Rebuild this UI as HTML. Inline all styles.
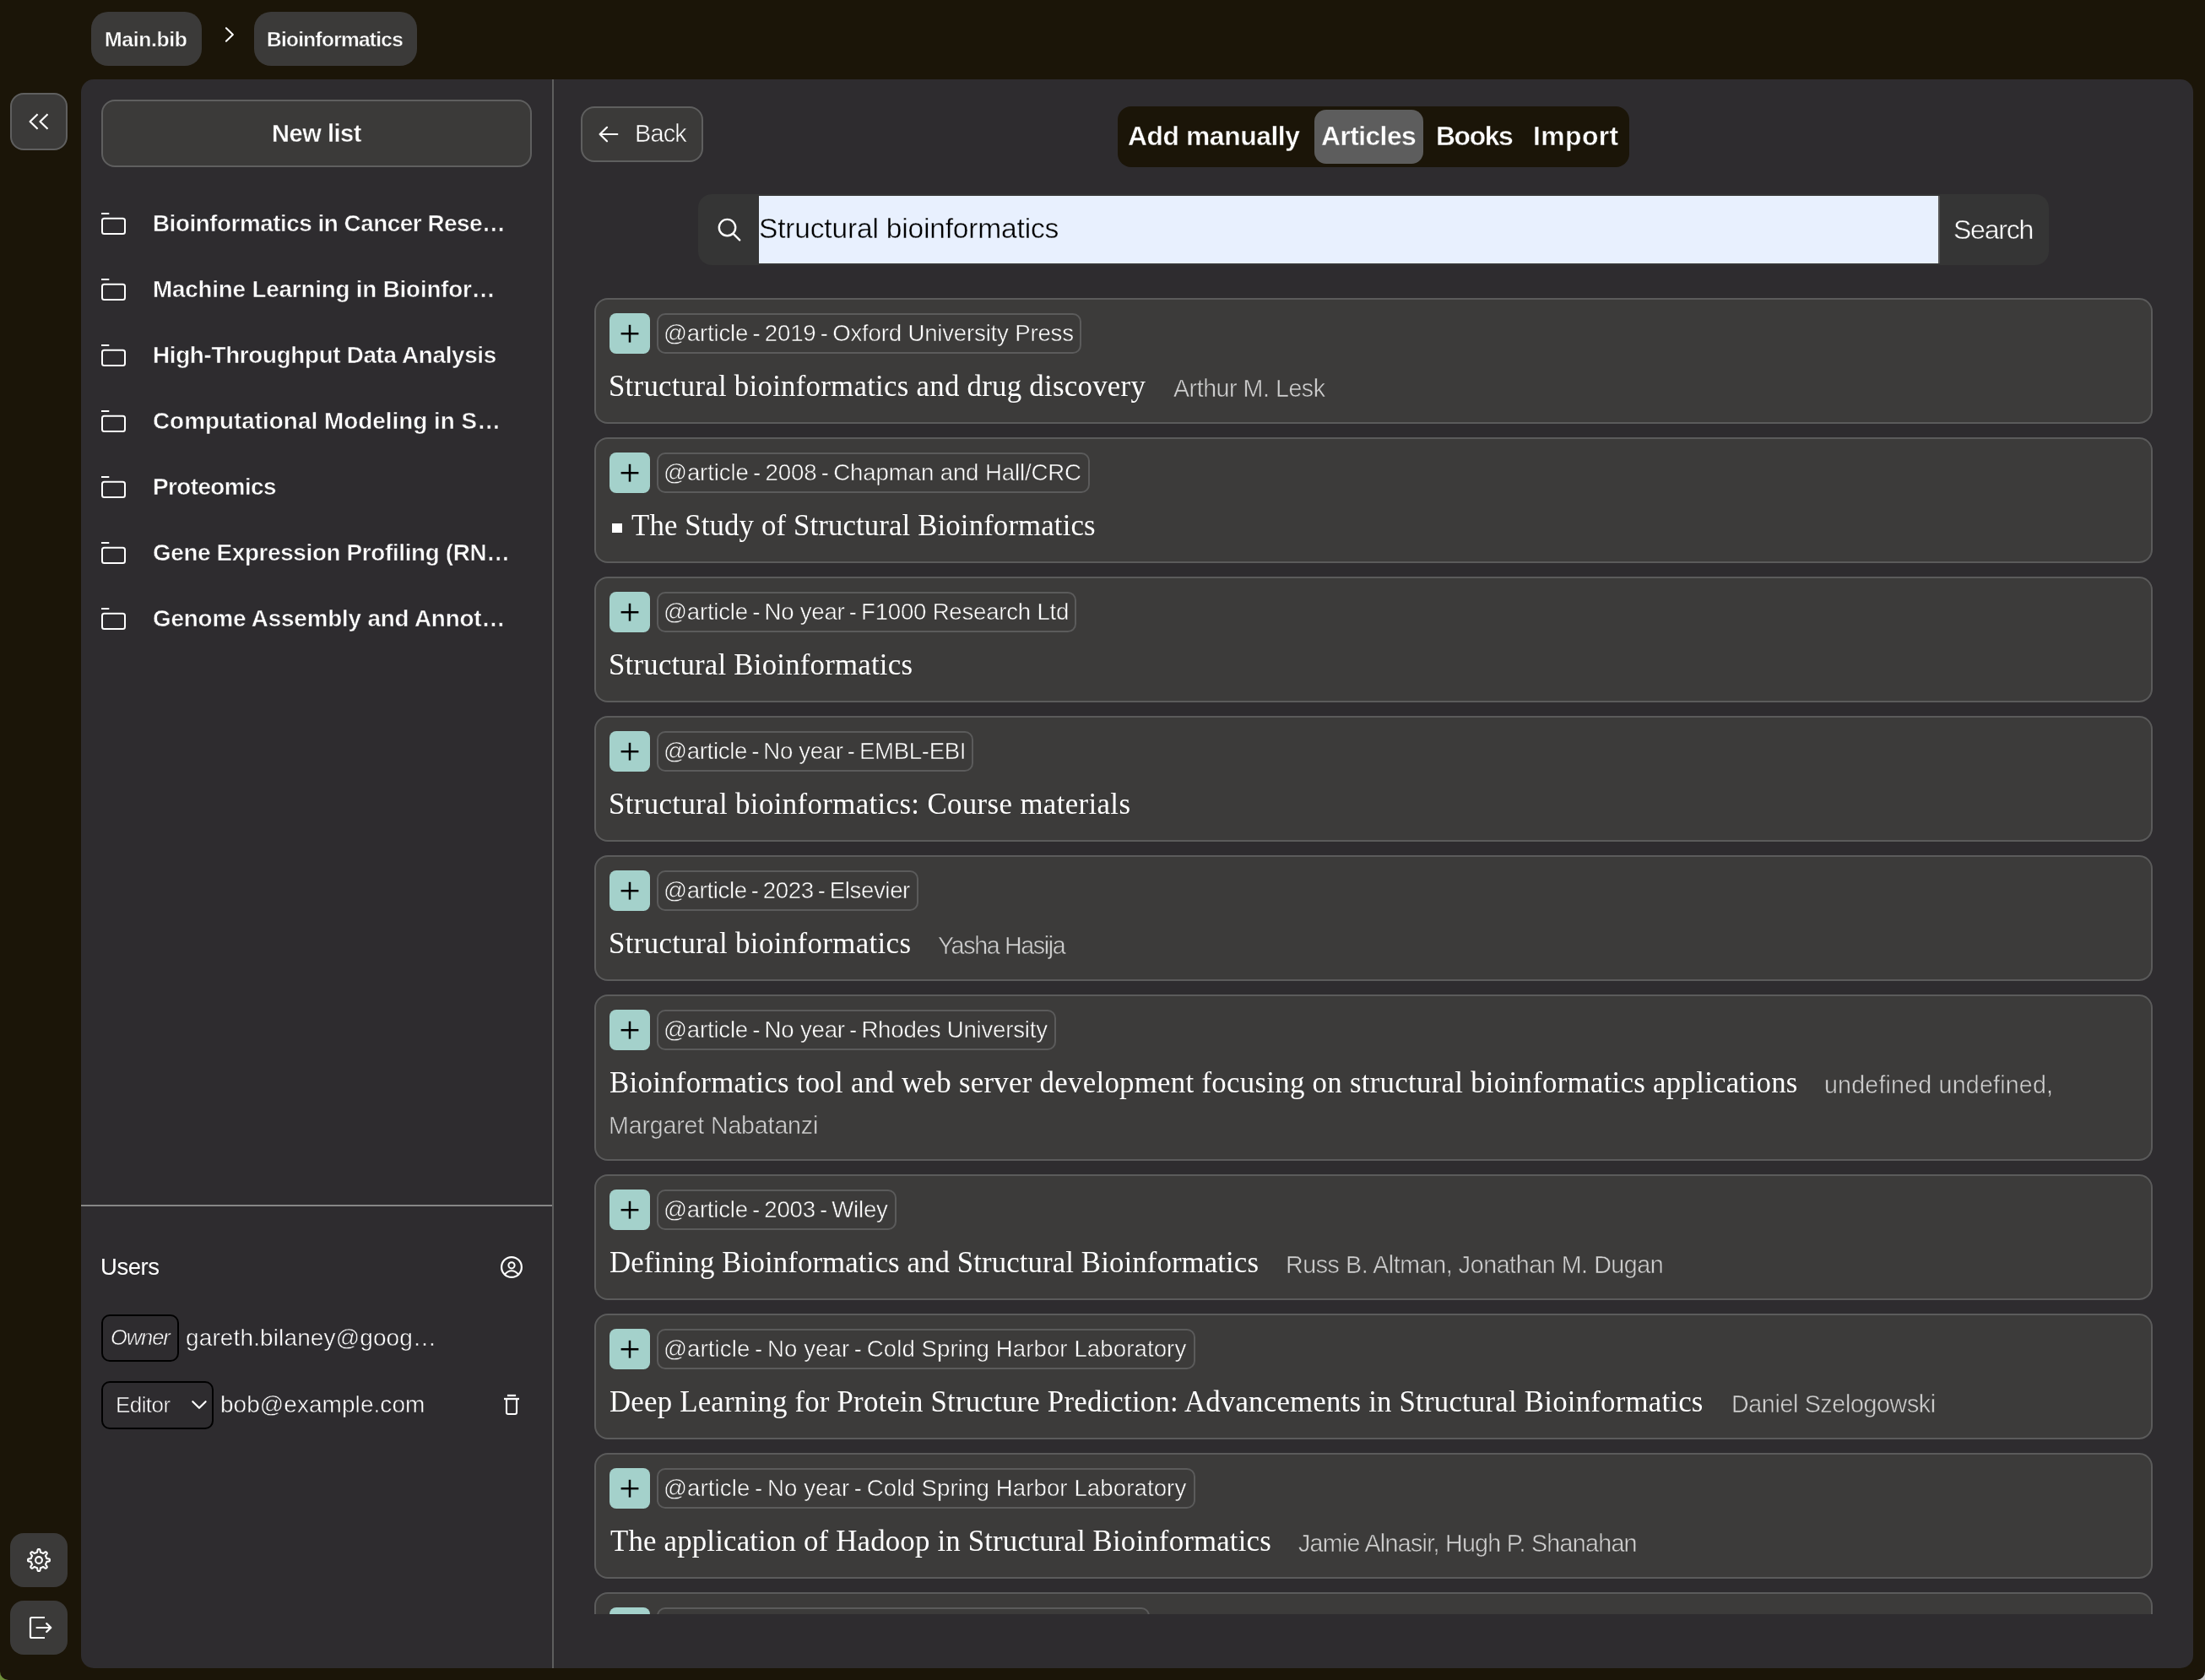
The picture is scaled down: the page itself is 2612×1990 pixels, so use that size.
<!DOCTYPE html>
<html><head><meta charset="utf-8"><style>
html,body{margin:0;padding:0}
body{width:2612px;height:1990px;background:#1b1508;position:relative;overflow:hidden;font-family:'Liberation Sans', sans-serif}
.t{position:absolute;white-space:nowrap;will-change:transform}
.box{position:absolute;box-sizing:border-box}
.card{position:absolute;box-sizing:border-box;left:704px;width:1846px;background:#3c3b3a;border:2px solid #5b5b5b;border-radius:16px}
.plus{position:absolute;left:722px;width:48px;height:48px;background:#a4d1cb;border-radius:8px}
.tag{position:absolute;box-sizing:border-box;left:778px;height:48px;border:2px solid #5b5b5b;border-radius:10px}
.ico{position:absolute;left:0;top:0}
</style></head><body>
<div class="box" style="left:0;top:1975px;width:24px;height:15px;background:#6f8f3a"></div>
<div class="box" style="left:2590px;top:1968px;width:22px;height:22px;background:#c8c8c8"></div>
<div class="box" style="left:0;top:0;width:2612px;height:1990px;background:#1b1508;border-radius:0 0 10px 10px"></div>
<div class="box" style="left:108px;top:14px;width:131px;height:64px;background:#3b3a39;border-radius:20px"></div>
<div class="box" style="left:301px;top:14px;width:193px;height:64px;background:#3b3a39;border-radius:20px"></div>
<div class="box" style="left:12px;top:110px;width:68px;height:68px;background:#3b3a39;border:2px solid #5f5f5f;border-radius:16px"></div>
<div class="box" style="left:12px;top:1816px;width:68px;height:64px;background:#3b3a39;border-radius:16px"></div>
<div class="box" style="left:12px;top:1896px;width:68px;height:64px;background:#3b3a39;border-radius:16px"></div>
<div class="box" style="left:96px;top:94px;width:2502px;height:1882px;background:#2e2c2f;border-radius:15px"></div>
<div class="box" style="left:654px;top:94px;width:2px;height:1882px;background:#5e5e5e"></div>
<div class="box" style="left:96px;top:1427px;width:558px;height:2px;background:#878787"></div>
<div class="box" style="left:120px;top:118px;width:510px;height:80px;background:#3b3a39;border:2px solid #5f5f5f;border-radius:16px"></div>
<div class="box" style="left:120px;top:1557px;width:92px;height:56px;border:2px solid #000;border-radius:10px"></div>
<div class="box" style="left:120px;top:1636px;width:133px;height:57px;border:2px solid #000;border-radius:10px"></div>
<div class="box" style="left:688px;top:126px;width:145px;height:66px;background:#3b3a39;border:2px solid #5f5f5f;border-radius:16px"></div>
<div class="box" style="left:1324px;top:126px;width:606px;height:72px;background:#1b1508;border-radius:16px"></div>
<div class="box" style="left:1557px;top:130px;width:129px;height:63.5px;background:#5d5d5d;border-radius:14px"></div>
<div class="box" style="left:827px;top:230px;width:1600px;height:84px;background:#353535;border-radius:16px"></div>
<div class="box" style="left:899px;top:232px;width:1397px;height:80px;background:#e8f0fe"></div>
<div class="box" style="left:2296px;top:232px;width:2px;height:80px;background:#555"></div>
<div style="position:absolute;left:656px;top:340px;width:1942px;height:1572px;overflow:hidden">
<div style="position:absolute;left:-656px;top:-340px;width:2612px;height:1990px">
<div class="card" style="top:353px;height:149px"></div>
<div class="plus" style="top:371px"></div>
<div class="tag" style="top:371px;width:503.4000000000001px"></div>
<div class="card" style="top:518px;height:149px"></div>
<div class="plus" style="top:536px"></div>
<div class="tag" style="top:536px;width:512.5px"></div>
<div style="position:absolute;left:725.4px;top:619.6px;width:11.4px;height:11px;background:#fff"></div>
<div class="card" style="top:683px;height:149px"></div>
<div class="plus" style="top:701px"></div>
<div class="tag" style="top:701px;width:497.20000000000005px"></div>
<div class="card" style="top:848px;height:149px"></div>
<div class="plus" style="top:866px"></div>
<div class="tag" style="top:866px;width:375px"></div>
<div class="card" style="top:1013px;height:149px"></div>
<div class="plus" style="top:1031px"></div>
<div class="tag" style="top:1031px;width:310.29999999999995px"></div>
<div class="card" style="top:1178px;height:197px"></div>
<div class="plus" style="top:1196px"></div>
<div class="tag" style="top:1196px;width:473.4000000000001px"></div>
<div class="card" style="top:1391px;height:149px"></div>
<div class="plus" style="top:1409px"></div>
<div class="tag" style="top:1409px;width:284.20000000000005px"></div>
<div class="card" style="top:1556px;height:149px"></div>
<div class="plus" style="top:1574px"></div>
<div class="tag" style="top:1574px;width:637.5999999999999px"></div>
<div class="card" style="top:1721px;height:149px"></div>
<div class="plus" style="top:1739px"></div>
<div class="tag" style="top:1739px;width:637.5999999999999px"></div>
<div class="card" style="top:1886px;height:149px"></div>
<div class="plus" style="top:1904px"></div>
<div class="tag" style="top:1904px;width:584.3px"></div>
</div></div>
<div class="t" style="left:124.30px;top:35.01px;font:normal 700 24.8px/24.8px 'Liberation Sans', sans-serif;color:#fff;letter-spacing:-0.387px;-webkit-text-stroke:0.4px #3b3a39">Main.bib</div>
<div class="t" style="left:316.20px;top:35.15px;font:normal 700 24.4px/24.4px 'Liberation Sans', sans-serif;color:#fff;letter-spacing:-0.692px;-webkit-text-stroke:0.4px #3b3a39">Bioinformatics</div>
<div class="t" style="left:321.60px;top:143.75px;font:normal 700 29px/29px 'Liberation Sans', sans-serif;color:#fff;letter-spacing:-0.447px;-webkit-text-stroke:0.4px #3b3a39">New list</div>
<div class="t" style="left:180.80px;top:250.97px;font:normal 700 27.8px/27.8px 'Liberation Sans', sans-serif;color:#fff;letter-spacing:-0.454px;-webkit-text-stroke:0.5px #2e2c2f">Bioinformatics in Cancer Rese…</div>
<div class="t" style="left:180.80px;top:328.97px;font:normal 700 27.8px/27.8px 'Liberation Sans', sans-serif;color:#fff;letter-spacing:-0.189px;-webkit-text-stroke:0.5px #2e2c2f">Machine Learning in Bioinfor…</div>
<div class="t" style="left:180.80px;top:406.97px;font:normal 700 27.8px/27.8px 'Liberation Sans', sans-serif;color:#fff;letter-spacing:-0.311px;-webkit-text-stroke:0.5px #2e2c2f">High-Throughput Data Analysis</div>
<div class="t" style="left:180.80px;top:484.97px;font:normal 700 27.8px/27.8px 'Liberation Sans', sans-serif;color:#fff;letter-spacing:0.046px;-webkit-text-stroke:0.5px #2e2c2f">Computational Modeling in S…</div>
<div class="t" style="left:180.80px;top:562.97px;font:normal 700 27.8px/27.8px 'Liberation Sans', sans-serif;color:#fff;letter-spacing:-0.548px;-webkit-text-stroke:0.5px #2e2c2f">Proteomics</div>
<div class="t" style="left:180.80px;top:640.97px;font:normal 700 27.8px/27.8px 'Liberation Sans', sans-serif;color:#fff;letter-spacing:-0.327px;-webkit-text-stroke:0.5px #2e2c2f">Gene Expression Profiling (RN…</div>
<div class="t" style="left:180.80px;top:718.97px;font:normal 700 27.8px/27.8px 'Liberation Sans', sans-serif;color:#fff;letter-spacing:-0.156px;-webkit-text-stroke:0.5px #2e2c2f">Genome Assembly and Annot…</div>
<div class="t" style="left:118.80px;top:1487.22px;font:normal 400 27.5px/27.5px 'Liberation Sans', sans-serif;color:#fff;letter-spacing:-0.465px">Users</div>
<div class="t" style="left:130.70px;top:1571.51px;font:italic 400 25.5px/25.5px 'Liberation Sans', sans-serif;color:#fff;letter-spacing:-1.078px;-webkit-text-stroke:0.5px #2e2c2f">Owner</div>
<div class="t" style="left:220.00px;top:1571.40px;font:normal 400 28px/28px 'Liberation Sans', sans-serif;color:#fff;letter-spacing:0.126px;-webkit-text-stroke:0.5px #2e2c2f">gareth.bilaney@goog…</div>
<div class="t" style="left:137.00px;top:1651.09px;font:normal 400 26px/26px 'Liberation Sans', sans-serif;color:#fff;letter-spacing:-0.572px;-webkit-text-stroke:0.5px #2e2c2f">Editor</div>
<div class="t" style="left:260.80px;top:1650.30px;font:normal 400 28px/28px 'Liberation Sans', sans-serif;color:#fff;letter-spacing:0.048px;-webkit-text-stroke:0.5px #2e2c2f">bob@example.com</div>
<div class="t" style="left:751.60px;top:144.32px;font:normal 400 28.8px/28.8px 'Liberation Sans', sans-serif;color:#fff;letter-spacing:-0.774px;-webkit-text-stroke:0.5px #3b3a39">Back</div>
<div class="t" style="left:1336.00px;top:145.58px;font:normal 700 31.8px/31.8px 'Liberation Sans', sans-serif;color:#fff;letter-spacing:-0.409px;-webkit-text-stroke:0.4px #1b1508">Add manually</div>
<div class="t" style="left:1565.30px;top:145.58px;font:normal 700 31.8px/31.8px 'Liberation Sans', sans-serif;color:#fff;letter-spacing:-0.566px;-webkit-text-stroke:0.4px #5d5d5d">Articles</div>
<div class="t" style="left:1701.30px;top:145.58px;font:normal 700 31.8px/31.8px 'Liberation Sans', sans-serif;color:#fff;letter-spacing:-1.373px;-webkit-text-stroke:0.4px #1b1508">Books</div>
<div class="t" style="left:1816.00px;top:145.58px;font:normal 700 31.8px/31.8px 'Liberation Sans', sans-serif;color:#fff;letter-spacing:0.455px;-webkit-text-stroke:0.4px #1b1508">Import</div>
<div class="t" style="left:898.80px;top:254.36px;font:normal 400 33.6px/33.6px 'Liberation Sans', sans-serif;color:#000;letter-spacing:-0.203px;-webkit-text-stroke:0.4px #e8f0fe">Structural bioinformatics</div>
<div class="t" style="left:2314.00px;top:255.81px;font:normal 400 32px/32px 'Liberation Sans', sans-serif;color:#fff;letter-spacing:-1.219px;-webkit-text-stroke:0.5px #353535">Search</div>
<div class="t" style="left:786.20px;top:381.34px;font:normal 400 27.6px/27.6px 'Liberation Sans', sans-serif;color:#fff;letter-spacing:-0.182px;-webkit-text-stroke:0.5px #3c3b3a">@article - 2019 - Oxford University Press</div>
<div class="t" style="left:720.60px;top:441.36px;font:normal 400 34.8px/34.8px 'Liberation Serif', serif;color:#fff;letter-spacing:0.268px">Structural bioinformatics and drug discovery</div>
<div class="t" style="left:1390.00px;top:446.49px;font:normal 400 28.6px/28.6px 'Liberation Sans', sans-serif;color:#cfcfcf;letter-spacing:-0.455px;-webkit-text-stroke:0.5px #3c3b3a">Arthur M. Lesk</div>
<div class="t" style="left:786.20px;top:546.34px;font:normal 400 27.6px/27.6px 'Liberation Sans', sans-serif;color:#fff;letter-spacing:-0.120px;-webkit-text-stroke:0.5px #3c3b3a">@article - 2008 - Chapman and Hall/CRC</div>
<div class="t" style="left:747.60px;top:606.36px;font:normal 400 34.8px/34.8px 'Liberation Serif', serif;color:#fff;letter-spacing:0.121px">The Study of Structural Bioinformatics</div>
<div class="t" style="left:786.20px;top:711.34px;font:normal 400 27.6px/27.6px 'Liberation Sans', sans-serif;color:#fff;letter-spacing:-0.221px;-webkit-text-stroke:0.5px #3c3b3a">@article - No year - F1000 Research Ltd</div>
<div class="t" style="left:720.60px;top:771.36px;font:normal 400 34.8px/34.8px 'Liberation Serif', serif;color:#fff;letter-spacing:0.220px">Structural Bioinformatics</div>
<div class="t" style="left:786.20px;top:876.34px;font:normal 400 27.6px/27.6px 'Liberation Sans', sans-serif;color:#fff;letter-spacing:-0.323px;-webkit-text-stroke:0.5px #3c3b3a">@article - No year - EMBL-EBI</div>
<div class="t" style="left:720.60px;top:936.36px;font:normal 400 34.8px/34.8px 'Liberation Serif', serif;color:#fff;letter-spacing:0.379px">Structural bioinformatics: Course materials</div>
<div class="t" style="left:786.20px;top:1041.34px;font:normal 400 27.6px/27.6px 'Liberation Sans', sans-serif;color:#fff;letter-spacing:-0.373px;-webkit-text-stroke:0.5px #3c3b3a">@article - 2023 - Elsevier</div>
<div class="t" style="left:720.60px;top:1101.36px;font:normal 400 34.8px/34.8px 'Liberation Serif', serif;color:#fff;letter-spacing:0.379px">Structural bioinformatics</div>
<div class="t" style="left:1111.00px;top:1106.49px;font:normal 400 28.6px/28.6px 'Liberation Sans', sans-serif;color:#cfcfcf;letter-spacing:-1.332px;-webkit-text-stroke:0.5px #3c3b3a">Yasha Hasija</div>
<div class="t" style="left:786.20px;top:1206.34px;font:normal 400 27.6px/27.6px 'Liberation Sans', sans-serif;color:#fff;letter-spacing:-0.206px;-webkit-text-stroke:0.5px #3c3b3a">@article - No year - Rhodes University</div>
<div class="t" style="left:721.60px;top:1266.36px;font:normal 400 34.8px/34.8px 'Liberation Serif', serif;color:#fff;letter-spacing:0.286px">Bioinformatics tool and web server development focusing on structural bioinformatics applications</div>
<div class="t" style="left:2161.00px;top:1271.49px;font:normal 400 28.6px/28.6px 'Liberation Sans', sans-serif;color:#cfcfcf;letter-spacing:0.201px;-webkit-text-stroke:0.5px #3c3b3a">undefined undefined,</div>
<div class="t" style="left:721.00px;top:1318.99px;font:normal 400 28.6px/28.6px 'Liberation Sans', sans-serif;color:#cfcfcf;letter-spacing:-0.163px;-webkit-text-stroke:0.5px #3c3b3a">Margaret Nabatanzi</div>
<div class="t" style="left:786.20px;top:1419.34px;font:normal 400 27.6px/27.6px 'Liberation Sans', sans-serif;color:#fff;letter-spacing:-0.233px;-webkit-text-stroke:0.5px #3c3b3a">@article - 2003 - Wiley</div>
<div class="t" style="left:721.60px;top:1479.36px;font:normal 400 34.8px/34.8px 'Liberation Serif', serif;color:#fff;letter-spacing:0.106px">Defining Bioinformatics and Structural Bioinformatics</div>
<div class="t" style="left:1523.00px;top:1484.49px;font:normal 400 28.6px/28.6px 'Liberation Sans', sans-serif;color:#cfcfcf;letter-spacing:-0.412px;-webkit-text-stroke:0.5px #3c3b3a">Russ B. Altman, Jonathan M. Dugan</div>
<div class="t" style="left:786.20px;top:1584.34px;font:normal 400 27.6px/27.6px 'Liberation Sans', sans-serif;color:#fff;letter-spacing:0.096px;-webkit-text-stroke:0.5px #3c3b3a">@article - No year - Cold Spring Harbor Laboratory</div>
<div class="t" style="left:721.60px;top:1644.36px;font:normal 400 34.8px/34.8px 'Liberation Serif', serif;color:#fff;letter-spacing:0.214px">Deep Learning for Protein Structure Prediction: Advancements in Structural Bioinformatics</div>
<div class="t" style="left:2050.60px;top:1649.49px;font:normal 400 28.6px/28.6px 'Liberation Sans', sans-serif;color:#cfcfcf;letter-spacing:-0.340px;-webkit-text-stroke:0.5px #3c3b3a">Daniel Szelogowski</div>
<div class="t" style="left:786.20px;top:1749.34px;font:normal 400 27.6px/27.6px 'Liberation Sans', sans-serif;color:#fff;letter-spacing:0.096px;-webkit-text-stroke:0.5px #3c3b3a">@article - No year - Cold Spring Harbor Laboratory</div>
<div class="t" style="left:722.60px;top:1809.36px;font:normal 400 34.8px/34.8px 'Liberation Serif', serif;color:#fff;letter-spacing:0.182px">The application of Hadoop in Structural Bioinformatics</div>
<div class="t" style="left:1538.00px;top:1814.49px;font:normal 400 28.6px/28.6px 'Liberation Sans', sans-serif;color:#cfcfcf;letter-spacing:-0.693px;-webkit-text-stroke:0.5px #3c3b3a">Jamie Alnasir, Hugh P. Shanahan</div>
<svg class="ico" width="2612" height="1990" viewBox="0 0 2612 1990" fill="none" stroke="#fff" stroke-width="2.2" stroke-linecap="round" stroke-linejoin="round">
<polyline points="267.9,33.2 275.9,41 267.9,48.8" stroke-width="2"/>
<polyline points="44.6,135.3 35.6,144 44.6,152.7" stroke-linecap="butt"/>
<polyline points="56.5,135.3 47.5,144 56.5,152.7" stroke-linecap="butt"/>
<polyline points="719,150.8 710.6,159 719,167.3"/>
<line x1="711" y1="159" x2="731.3" y2="159"/>
<circle cx="861.5" cy="269.6" r="9.7" stroke-width="2.4"/>
<line x1="868.6" y1="276.8" x2="876.2" y2="284.4" stroke-width="2.4"/>
<circle cx="606" cy="1501" r="11.9"/>
<circle cx="606" cy="1498.8" r="3.6" stroke-width="2"/>
<path d="M598 1509.6 C600.5 1506.3 603 1505.3 606 1505.3 C609 1505.3 611.5 1506.3 614 1509.6" stroke-width="2"/>
<line x1="600.9" y1="1653" x2="611.1" y2="1653" stroke-width="2.3" stroke-linecap="butt"/>
<line x1="597" y1="1657" x2="615" y2="1657" stroke-width="2.3" stroke-linecap="butt"/>
<path d="M600 1657 V1673 Q600 1675 602 1675 H610 Q612 1675 612 1673 V1657" stroke-width="2.1"/>
<polyline points="228.3,1660.2 236,1667.8 243.6,1660.2"/>
<path d="M46.00 1835.10 L46.11 1835.10 L46.23 1835.10 L46.34 1835.10 L46.45 1835.11 L46.56 1835.11 L46.68 1835.12 L46.79 1835.12 L46.90 1835.13 L47.01 1835.16 L47.12 1835.24 L47.22 1835.38 L47.31 1835.56 L47.39 1835.78 L47.47 1836.04 L47.54 1836.32 L47.60 1836.63 L47.65 1836.94 L47.70 1837.26 L47.75 1837.56 L47.79 1837.85 L47.83 1838.12 L47.88 1838.35 L47.92 1838.54 L47.98 1838.69 L48.04 1838.79 L48.11 1838.84 L48.19 1838.86 L48.27 1838.88 L48.35 1838.90 L48.43 1838.92 L48.51 1838.94 L48.59 1838.96 L48.67 1838.99 L48.75 1839.01 L48.83 1839.04 L48.90 1839.06 L48.98 1839.09 L49.06 1839.11 L49.14 1839.14 L49.21 1839.17 L49.29 1839.20 L49.37 1839.22 L49.45 1839.25 L49.52 1839.28 L49.60 1839.32 L49.67 1839.35 L49.75 1839.38 L49.82 1839.41 L49.90 1839.45 L49.97 1839.48 L50.05 1839.52 L50.12 1839.55 L50.19 1839.59 L50.27 1839.62 L50.34 1839.66 L50.41 1839.70 L50.49 1839.74 L50.56 1839.78 L50.63 1839.82 L50.70 1839.86 L50.77 1839.90 L50.84 1839.94 L50.91 1839.99 L50.98 1840.03 L51.07 1840.05 L51.18 1840.02 L51.33 1839.95 L51.50 1839.85 L51.69 1839.72 L51.91 1839.56 L52.14 1839.39 L52.39 1839.20 L52.65 1839.01 L52.91 1838.83 L53.17 1838.66 L53.42 1838.50 L53.66 1838.38 L53.87 1838.28 L54.07 1838.22 L54.23 1838.19 L54.36 1838.21 L54.46 1838.26 L54.55 1838.34 L54.63 1838.41 L54.72 1838.49 L54.80 1838.57 L54.88 1838.64 L54.96 1838.72 L55.04 1838.80 L55.12 1838.88 L55.20 1838.96 L55.28 1839.04 L55.36 1839.12 L55.43 1839.20 L55.51 1839.28 L55.59 1839.37 L55.66 1839.45 L55.74 1839.54 L55.79 1839.64 L55.81 1839.77 L55.78 1839.93 L55.72 1840.13 L55.62 1840.34 L55.50 1840.58 L55.34 1840.83 L55.17 1841.09 L54.99 1841.35 L54.80 1841.61 L54.61 1841.86 L54.44 1842.09 L54.28 1842.31 L54.15 1842.50 L54.05 1842.67 L53.98 1842.82 L53.95 1842.93 L53.97 1843.02 L54.01 1843.09 L54.06 1843.16 L54.10 1843.23 L54.14 1843.30 L54.18 1843.37 L54.22 1843.44 L54.26 1843.51 L54.30 1843.59 L54.34 1843.66 L54.38 1843.73 L54.41 1843.81 L54.45 1843.88 L54.48 1843.95 L54.52 1844.03 L54.55 1844.10 L54.59 1844.18 L54.62 1844.25 L54.65 1844.33 L54.68 1844.40 L54.72 1844.48 L54.75 1844.55 L54.78 1844.63 L54.80 1844.71 L54.83 1844.79 L54.86 1844.86 L54.89 1844.94 L54.91 1845.02 L54.94 1845.10 L54.96 1845.17 L54.99 1845.25 L55.01 1845.33 L55.04 1845.41 L55.06 1845.49 L55.08 1845.57 L55.10 1845.65 L55.12 1845.73 L55.14 1845.81 L55.16 1845.89 L55.21 1845.96 L55.31 1846.02 L55.46 1846.08 L55.65 1846.12 L55.88 1846.17 L56.15 1846.21 L56.44 1846.25 L56.74 1846.30 L57.06 1846.35 L57.37 1846.40 L57.68 1846.46 L57.96 1846.53 L58.22 1846.61 L58.44 1846.69 L58.62 1846.78 L58.76 1846.88 L58.84 1846.99 L58.87 1847.10 L58.88 1847.21 L58.88 1847.32 L58.89 1847.44 L58.89 1847.55 L58.90 1847.66 L58.90 1847.77 L58.90 1847.89 L58.90 1848.00 L58.90 1848.11 L58.90 1848.23 L58.90 1848.34 L58.89 1848.45 L58.89 1848.56 L58.88 1848.68 L58.88 1848.79 L58.87 1848.90 L58.84 1849.01 L58.76 1849.12 L58.62 1849.22 L58.44 1849.31 L58.22 1849.39 L57.96 1849.47 L57.68 1849.54 L57.37 1849.60 L57.06 1849.65 L56.74 1849.70 L56.44 1849.75 L56.15 1849.79 L55.88 1849.83 L55.65 1849.88 L55.46 1849.92 L55.31 1849.98 L55.21 1850.04 L55.16 1850.11 L55.14 1850.19 L55.12 1850.27 L55.10 1850.35 L55.08 1850.43 L55.06 1850.51 L55.04 1850.59 L55.01 1850.67 L54.99 1850.75 L54.96 1850.83 L54.94 1850.90 L54.91 1850.98 L54.89 1851.06 L54.86 1851.14 L54.83 1851.21 L54.80 1851.29 L54.78 1851.37 L54.75 1851.45 L54.72 1851.52 L54.68 1851.60 L54.65 1851.67 L54.62 1851.75 L54.59 1851.82 L54.55 1851.90 L54.52 1851.97 L54.48 1852.05 L54.45 1852.12 L54.41 1852.19 L54.38 1852.27 L54.34 1852.34 L54.30 1852.41 L54.26 1852.49 L54.22 1852.56 L54.18 1852.63 L54.14 1852.70 L54.10 1852.77 L54.06 1852.84 L54.01 1852.91 L53.97 1852.98 L53.95 1853.07 L53.98 1853.18 L54.05 1853.33 L54.15 1853.50 L54.28 1853.69 L54.44 1853.91 L54.61 1854.14 L54.80 1854.39 L54.99 1854.65 L55.17 1854.91 L55.34 1855.17 L55.50 1855.42 L55.62 1855.66 L55.72 1855.87 L55.78 1856.07 L55.81 1856.23 L55.79 1856.36 L55.74 1856.46 L55.66 1856.55 L55.59 1856.63 L55.51 1856.72 L55.43 1856.80 L55.36 1856.88 L55.28 1856.96 L55.20 1857.04 L55.12 1857.12 L55.04 1857.20 L54.96 1857.28 L54.88 1857.36 L54.80 1857.43 L54.72 1857.51 L54.63 1857.59 L54.55 1857.66 L54.46 1857.74 L54.36 1857.79 L54.23 1857.81 L54.07 1857.78 L53.87 1857.72 L53.66 1857.62 L53.42 1857.50 L53.17 1857.34 L52.91 1857.17 L52.65 1856.99 L52.39 1856.80 L52.14 1856.61 L51.91 1856.44 L51.69 1856.28 L51.50 1856.15 L51.33 1856.05 L51.18 1855.98 L51.07 1855.95 L50.98 1855.97 L50.91 1856.01 L50.84 1856.06 L50.77 1856.10 L50.70 1856.14 L50.63 1856.18 L50.56 1856.22 L50.49 1856.26 L50.41 1856.30 L50.34 1856.34 L50.27 1856.38 L50.19 1856.41 L50.12 1856.45 L50.05 1856.48 L49.97 1856.52 L49.90 1856.55 L49.82 1856.59 L49.75 1856.62 L49.67 1856.65 L49.60 1856.68 L49.52 1856.72 L49.45 1856.75 L49.37 1856.78 L49.29 1856.80 L49.21 1856.83 L49.14 1856.86 L49.06 1856.89 L48.98 1856.91 L48.90 1856.94 L48.83 1856.96 L48.75 1856.99 L48.67 1857.01 L48.59 1857.04 L48.51 1857.06 L48.43 1857.08 L48.35 1857.10 L48.27 1857.12 L48.19 1857.14 L48.11 1857.16 L48.04 1857.21 L47.98 1857.31 L47.92 1857.46 L47.88 1857.65 L47.83 1857.88 L47.79 1858.15 L47.75 1858.44 L47.70 1858.74 L47.65 1859.06 L47.60 1859.37 L47.54 1859.68 L47.47 1859.96 L47.39 1860.22 L47.31 1860.44 L47.22 1860.62 L47.12 1860.76 L47.01 1860.84 L46.90 1860.87 L46.79 1860.88 L46.68 1860.88 L46.56 1860.89 L46.45 1860.89 L46.34 1860.90 L46.23 1860.90 L46.11 1860.90 L46.00 1860.90 L45.89 1860.90 L45.77 1860.90 L45.66 1860.90 L45.55 1860.89 L45.44 1860.89 L45.32 1860.88 L45.21 1860.88 L45.10 1860.87 L44.99 1860.84 L44.88 1860.76 L44.78 1860.62 L44.69 1860.44 L44.61 1860.22 L44.53 1859.96 L44.46 1859.68 L44.40 1859.37 L44.35 1859.06 L44.30 1858.74 L44.25 1858.44 L44.21 1858.15 L44.17 1857.88 L44.12 1857.65 L44.08 1857.46 L44.02 1857.31 L43.96 1857.21 L43.89 1857.16 L43.81 1857.14 L43.73 1857.12 L43.65 1857.10 L43.57 1857.08 L43.49 1857.06 L43.41 1857.04 L43.33 1857.01 L43.25 1856.99 L43.17 1856.96 L43.10 1856.94 L43.02 1856.91 L42.94 1856.89 L42.86 1856.86 L42.79 1856.83 L42.71 1856.80 L42.63 1856.78 L42.55 1856.75 L42.48 1856.72 L42.40 1856.68 L42.33 1856.65 L42.25 1856.62 L42.18 1856.59 L42.10 1856.55 L42.03 1856.52 L41.95 1856.48 L41.88 1856.45 L41.81 1856.41 L41.73 1856.38 L41.66 1856.34 L41.59 1856.30 L41.51 1856.26 L41.44 1856.22 L41.37 1856.18 L41.30 1856.14 L41.23 1856.10 L41.16 1856.06 L41.09 1856.01 L41.02 1855.97 L40.93 1855.95 L40.82 1855.98 L40.67 1856.05 L40.50 1856.15 L40.31 1856.28 L40.09 1856.44 L39.86 1856.61 L39.61 1856.80 L39.35 1856.99 L39.09 1857.17 L38.83 1857.34 L38.58 1857.50 L38.34 1857.62 L38.13 1857.72 L37.93 1857.78 L37.77 1857.81 L37.64 1857.79 L37.54 1857.74 L37.45 1857.66 L37.37 1857.59 L37.28 1857.51 L37.20 1857.43 L37.12 1857.36 L37.04 1857.28 L36.96 1857.20 L36.88 1857.12 L36.80 1857.04 L36.72 1856.96 L36.64 1856.88 L36.57 1856.80 L36.49 1856.72 L36.41 1856.63 L36.34 1856.55 L36.26 1856.46 L36.21 1856.36 L36.19 1856.23 L36.22 1856.07 L36.28 1855.87 L36.38 1855.66 L36.50 1855.42 L36.66 1855.17 L36.83 1854.91 L37.01 1854.65 L37.20 1854.39 L37.39 1854.14 L37.56 1853.91 L37.72 1853.69 L37.85 1853.50 L37.95 1853.33 L38.02 1853.18 L38.05 1853.07 L38.03 1852.98 L37.99 1852.91 L37.94 1852.84 L37.90 1852.77 L37.86 1852.70 L37.82 1852.63 L37.78 1852.56 L37.74 1852.49 L37.70 1852.41 L37.66 1852.34 L37.62 1852.27 L37.59 1852.19 L37.55 1852.12 L37.52 1852.05 L37.48 1851.97 L37.45 1851.90 L37.41 1851.82 L37.38 1851.75 L37.35 1851.67 L37.32 1851.60 L37.28 1851.52 L37.25 1851.45 L37.22 1851.37 L37.20 1851.29 L37.17 1851.21 L37.14 1851.14 L37.11 1851.06 L37.09 1850.98 L37.06 1850.90 L37.04 1850.83 L37.01 1850.75 L36.99 1850.67 L36.96 1850.59 L36.94 1850.51 L36.92 1850.43 L36.90 1850.35 L36.88 1850.27 L36.86 1850.19 L36.84 1850.11 L36.79 1850.04 L36.69 1849.98 L36.54 1849.92 L36.35 1849.88 L36.12 1849.83 L35.85 1849.79 L35.56 1849.75 L35.26 1849.70 L34.94 1849.65 L34.63 1849.60 L34.32 1849.54 L34.04 1849.47 L33.78 1849.39 L33.56 1849.31 L33.38 1849.22 L33.24 1849.12 L33.16 1849.01 L33.13 1848.90 L33.12 1848.79 L33.12 1848.68 L33.11 1848.56 L33.11 1848.45 L33.10 1848.34 L33.10 1848.23 L33.10 1848.11 L33.10 1848.00 L33.10 1847.89 L33.10 1847.77 L33.10 1847.66 L33.11 1847.55 L33.11 1847.44 L33.12 1847.32 L33.12 1847.21 L33.13 1847.10 L33.16 1846.99 L33.24 1846.88 L33.38 1846.78 L33.56 1846.69 L33.78 1846.61 L34.04 1846.53 L34.32 1846.46 L34.63 1846.40 L34.94 1846.35 L35.26 1846.30 L35.56 1846.25 L35.85 1846.21 L36.12 1846.17 L36.35 1846.12 L36.54 1846.08 L36.69 1846.02 L36.79 1845.96 L36.84 1845.89 L36.86 1845.81 L36.88 1845.73 L36.90 1845.65 L36.92 1845.57 L36.94 1845.49 L36.96 1845.41 L36.99 1845.33 L37.01 1845.25 L37.04 1845.17 L37.06 1845.10 L37.09 1845.02 L37.11 1844.94 L37.14 1844.86 L37.17 1844.79 L37.20 1844.71 L37.22 1844.63 L37.25 1844.55 L37.28 1844.48 L37.32 1844.40 L37.35 1844.33 L37.38 1844.25 L37.41 1844.18 L37.45 1844.10 L37.48 1844.03 L37.52 1843.95 L37.55 1843.88 L37.59 1843.81 L37.62 1843.73 L37.66 1843.66 L37.70 1843.59 L37.74 1843.51 L37.78 1843.44 L37.82 1843.37 L37.86 1843.30 L37.90 1843.23 L37.94 1843.16 L37.99 1843.09 L38.03 1843.02 L38.05 1842.93 L38.02 1842.82 L37.95 1842.67 L37.85 1842.50 L37.72 1842.31 L37.56 1842.09 L37.39 1841.86 L37.20 1841.61 L37.01 1841.35 L36.83 1841.09 L36.66 1840.83 L36.50 1840.58 L36.38 1840.34 L36.28 1840.13 L36.22 1839.93 L36.19 1839.77 L36.21 1839.64 L36.26 1839.54 L36.34 1839.45 L36.41 1839.37 L36.49 1839.28 L36.57 1839.20 L36.64 1839.12 L36.72 1839.04 L36.80 1838.96 L36.88 1838.88 L36.96 1838.80 L37.04 1838.72 L37.12 1838.64 L37.20 1838.57 L37.28 1838.49 L37.37 1838.41 L37.45 1838.34 L37.54 1838.26 L37.64 1838.21 L37.77 1838.19 L37.93 1838.22 L38.13 1838.28 L38.34 1838.38 L38.58 1838.50 L38.83 1838.66 L39.09 1838.83 L39.35 1839.01 L39.61 1839.20 L39.86 1839.39 L40.09 1839.56 L40.31 1839.72 L40.50 1839.85 L40.67 1839.95 L40.82 1840.02 L40.93 1840.05 L41.02 1840.03 L41.09 1839.99 L41.16 1839.94 L41.23 1839.90 L41.30 1839.86 L41.37 1839.82 L41.44 1839.78 L41.51 1839.74 L41.59 1839.70 L41.66 1839.66 L41.73 1839.62 L41.81 1839.59 L41.88 1839.55 L41.95 1839.52 L42.03 1839.48 L42.10 1839.45 L42.18 1839.41 L42.25 1839.38 L42.33 1839.35 L42.40 1839.32 L42.48 1839.28 L42.55 1839.25 L42.63 1839.22 L42.71 1839.20 L42.79 1839.17 L42.86 1839.14 L42.94 1839.11 L43.02 1839.09 L43.10 1839.06 L43.17 1839.04 L43.25 1839.01 L43.33 1838.99 L43.41 1838.96 L43.49 1838.94 L43.57 1838.92 L43.65 1838.90 L43.73 1838.88 L43.81 1838.86 L43.89 1838.84 L43.96 1838.79 L44.02 1838.69 L44.08 1838.54 L44.12 1838.35 L44.17 1838.12 L44.21 1837.85 L44.25 1837.56 L44.30 1837.26 L44.35 1836.94 L44.40 1836.63 L44.46 1836.32 L44.53 1836.04 L44.61 1835.78 L44.69 1835.56 L44.78 1835.38 L44.88 1835.24 L44.99 1835.16 L45.10 1835.13 L45.21 1835.12 L45.32 1835.12 L45.44 1835.11 L45.55 1835.11 L45.66 1835.10 L45.77 1835.10 L45.89 1835.10Z" stroke-width="2.1"/>
<circle cx="46" cy="1848" r="3.9" stroke-width="2.1"/>
<path d="M53 1916 H37.5 Q36 1916 36 1917.5 V1938.5 Q36 1940 37.5 1940 H53" stroke-linecap="butt" stroke-linejoin="miter"/>
<line x1="43.5" y1="1928" x2="60" y2="1928"/>
<polyline points="55.2,1923.1 60.3,1928 55.2,1932.9"/>
<line x1="120" y1="253" x2="129.3" y2="253" stroke-width="2" stroke-linecap="butt"/><rect x="121" y="258.7" width="27" height="18.4" rx="2.5" stroke-width="2"/><line x1="120" y1="331" x2="129.3" y2="331" stroke-width="2" stroke-linecap="butt"/><rect x="121" y="336.7" width="27" height="18.4" rx="2.5" stroke-width="2"/><line x1="120" y1="409" x2="129.3" y2="409" stroke-width="2" stroke-linecap="butt"/><rect x="121" y="414.7" width="27" height="18.4" rx="2.5" stroke-width="2"/><line x1="120" y1="487" x2="129.3" y2="487" stroke-width="2" stroke-linecap="butt"/><rect x="121" y="492.7" width="27" height="18.4" rx="2.5" stroke-width="2"/><line x1="120" y1="565" x2="129.3" y2="565" stroke-width="2" stroke-linecap="butt"/><rect x="121" y="570.7" width="27" height="18.4" rx="2.5" stroke-width="2"/><line x1="120" y1="643" x2="129.3" y2="643" stroke-width="2" stroke-linecap="butt"/><rect x="121" y="648.7" width="27" height="18.4" rx="2.5" stroke-width="2"/><line x1="120" y1="721" x2="129.3" y2="721" stroke-width="2" stroke-linecap="butt"/><rect x="121" y="726.7" width="27" height="18.4" rx="2.5" stroke-width="2"/><line x1="735.6" y1="395.2" x2="756.4" y2="395.2" stroke="#000" stroke-width="2.5" stroke-linecap="butt"/><line x1="746" y1="384.8" x2="746" y2="405.59999999999997" stroke="#000" stroke-width="2.5" stroke-linecap="butt"/><line x1="735.6" y1="560.2" x2="756.4" y2="560.2" stroke="#000" stroke-width="2.5" stroke-linecap="butt"/><line x1="746" y1="549.8000000000001" x2="746" y2="570.6" stroke="#000" stroke-width="2.5" stroke-linecap="butt"/><line x1="735.6" y1="725.2" x2="756.4" y2="725.2" stroke="#000" stroke-width="2.5" stroke-linecap="butt"/><line x1="746" y1="714.8000000000001" x2="746" y2="735.6" stroke="#000" stroke-width="2.5" stroke-linecap="butt"/><line x1="735.6" y1="890.2" x2="756.4" y2="890.2" stroke="#000" stroke-width="2.5" stroke-linecap="butt"/><line x1="746" y1="879.8000000000001" x2="746" y2="900.6" stroke="#000" stroke-width="2.5" stroke-linecap="butt"/><line x1="735.6" y1="1055.2" x2="756.4" y2="1055.2" stroke="#000" stroke-width="2.5" stroke-linecap="butt"/><line x1="746" y1="1044.8" x2="746" y2="1065.6000000000001" stroke="#000" stroke-width="2.5" stroke-linecap="butt"/><line x1="735.6" y1="1220.2" x2="756.4" y2="1220.2" stroke="#000" stroke-width="2.5" stroke-linecap="butt"/><line x1="746" y1="1209.8" x2="746" y2="1230.6000000000001" stroke="#000" stroke-width="2.5" stroke-linecap="butt"/><line x1="735.6" y1="1433.2" x2="756.4" y2="1433.2" stroke="#000" stroke-width="2.5" stroke-linecap="butt"/><line x1="746" y1="1422.8" x2="746" y2="1443.6000000000001" stroke="#000" stroke-width="2.5" stroke-linecap="butt"/><line x1="735.6" y1="1598.2" x2="756.4" y2="1598.2" stroke="#000" stroke-width="2.5" stroke-linecap="butt"/><line x1="746" y1="1587.8" x2="746" y2="1608.6000000000001" stroke="#000" stroke-width="2.5" stroke-linecap="butt"/><line x1="735.6" y1="1763.2" x2="756.4" y2="1763.2" stroke="#000" stroke-width="2.5" stroke-linecap="butt"/><line x1="746" y1="1752.8" x2="746" y2="1773.6000000000001" stroke="#000" stroke-width="2.5" stroke-linecap="butt"/></svg>
</body></html>
